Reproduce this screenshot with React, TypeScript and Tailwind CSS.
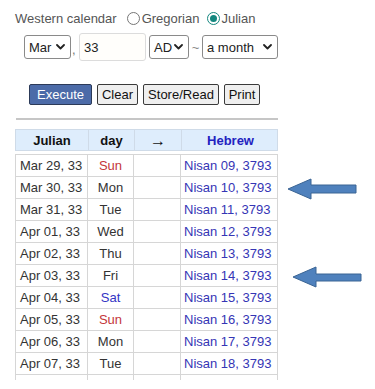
import React from "react";

const rows: [string, string, string, string][] = [
  ["Mar 29, 33", "Sun", "text-[#c4363a]", "Nisan 09, 3793"],
  ["Mar 30, 33", "Mon", "text-[#333333]", "Nisan 10, 3793"],
  ["Mar 31, 33", "Tue", "text-[#333333]", "Nisan 11, 3793"],
  ["Apr 01, 33", "Wed", "text-[#333333]", "Nisan 12, 3793"],
  ["Apr 02, 33", "Thu", "text-[#333333]", "Nisan 13, 3793"],
  ["Apr 03, 33", "Fri", "text-[#333333]", "Nisan 14, 3793"],
  ["Apr 04, 33", "Sat", "text-[#3434c4]", "Nisan 15, 3793"],
  ["Apr 05, 33", "Sun", "text-[#c4363a]", "Nisan 16, 3793"],
  ["Apr 06, 33", "Mon", "text-[#333333]", "Nisan 17, 3793"],
  ["Apr 07, 33", "Tue", "text-[#333333]", "Nisan 18, 3793"],
  ["", "", "text-[#333333]", ""],
];

function Chevron() {
  return (
    <svg width="9" height="6" viewBox="0 0 9 6" className="shrink-0">
      <path d="M1 1 L4.5 4.5 L8 1" fill="none" stroke="#222" strokeWidth="1.8" strokeLinecap="round" strokeLinejoin="round" />
    </svg>
  );
}

function Select({ label, w }: { label: string; w: string }) {
  return (
    <div className={`${w} h-[24px] flex items-center justify-between pl-[4px] pr-[5px] border border-[#8a8a8a] rounded-[3px] bg-white text-[#222]`}>
      <span>{label}</span>
      <Chevron />
    </div>
  );
}

function Btn({ label, w }: { label: string; w: string }) {
  return (
    <div className={`${w} h-[21px] flex items-center justify-center border border-[#3a3a3a] rounded-[2px] bg-[#efefef] text-[#111]`}>
      {label}
    </div>
  );
}

export default function App() {
  return (
    <div
      className="relative w-[375px] h-[389px] overflow-hidden bg-white text-[13px] leading-[15px]"
      style={{ fontFamily: '"Liberation Sans", Arial, sans-serif' }}
    >
      {/* Row 1 */}
      <div className="pt-[8px] pl-[15px] h-[28px] flex items-center text-[#555]">
        <span>Western calendar</span>
        <span className="ml-[10px] w-[13px] h-[13px] rounded-full border border-[#767676] bg-white" />
        <span className="ml-[2px]">Gregorian</span>
        <span className="ml-[8px] w-[13px] h-[13px] rounded-full border border-[#14877f] bg-white flex items-center justify-center">
          <span className="w-[7px] h-[7px] rounded-full bg-[#14877f]" />
        </span>
        <span className="ml-[1px]">Julian</span>
      </div>

      {/* Row 2 */}
      <div className="mt-[5px] pl-[24px] h-[28px] flex items-center">
        <Select label="Mar" w="w-[47px]" />
        <span className="w-[8px] pl-[1px] text-[#777] self-end mb-[4px]">,</span>
        <div className="w-[67px] h-[28px] flex items-center pl-[4px] border border-[#dcdcdc] rounded-[3px] bg-[#fffefb] text-[#222]">
          33
        </div>
        <div className="ml-[3px]">
          <Select label="AD" w="w-[40px]" />
        </div>
        <span className="w-[13px] text-center text-[#888]">~</span>
        <Select label="a month" w="w-[76px]" />
      </div>

      {/* Buttons */}
      <div className="mt-[23px] pl-[29px] flex gap-[5px]">
        <div className="w-[63px] h-[21px] flex items-center justify-center border border-[#2c3a58] rounded-[2px] bg-[#4c6ba8] text-white">
          Execute
        </div>
        <Btn label="Clear" w="w-[41px]" />
        <Btn label="Store/Read" w="w-[76px]" />
        <Btn label="Print" w="w-[36px]" />
      </div>

      {/* Divider */}
      <div className="mt-[13px] ml-[16px] w-[262px] h-[2px] bg-[#c6c6c6]" />

      {/* Table header */}
      <div className="mt-[9px] ml-[15px] w-[263px] h-[22px] grid grid-cols-[73px_46px_47px_97px] bg-[#deedfc] border border-[#cfdbe8] font-bold text-[#111]">
        <div className="flex items-center justify-center border-r border-[#cfdbe8]">Julian</div>
        <div className="flex items-center justify-center border-r border-[#cfdbe8]">day</div>
        <div className="flex items-center justify-center border-r border-[#cfdbe8] font-normal text-[16px]">→</div>
        <div className="flex items-center justify-center text-[#2222c0]">Hebrew</div>
      </div>

      {/* Table body */}
      <div className="mt-[3px] ml-[15px] w-[263px] h-[226px] overflow-hidden border-t border-[#d6d6d6]">
        {rows.map(([d, day, cls, heb], i) => (
          <div key={i} className="h-[22px] grid grid-cols-[73px_46px_47px_97px] border-b border-[#d6d6d6]">
            <div className="flex items-center pl-[4px] border-l border-r border-[#d6d6d6] text-[#333]">{d}</div>
            <div className={`flex items-center justify-center border-r border-[#d6d6d6] ${cls}`}>{day}</div>
            <div className="border-r border-[#d6d6d6]" />
            <div className="flex items-center pl-[3px] border-r border-[#d6d6d6] text-[#3535b5]">{heb}</div>
          </div>
        ))}
      </div>

      {/* Annotation arrows */}
      <svg className="absolute left-0 top-0 pointer-events-none" width="375" height="389" viewBox="0 0 375 389">
        <polygon
          points="288,189 311,179 311,185 356,185 356,193 311,193 311,199"
          fill="#4f81bd"
          stroke="#3a6494"
          strokeWidth="1"
        />
        <polygon
          points="293,277 316,267 316,274 361,274 361,281 316,281 316,287"
          fill="#4f81bd"
          stroke="#3a6494"
          strokeWidth="1"
        />
      </svg>
    </div>
  );
}
